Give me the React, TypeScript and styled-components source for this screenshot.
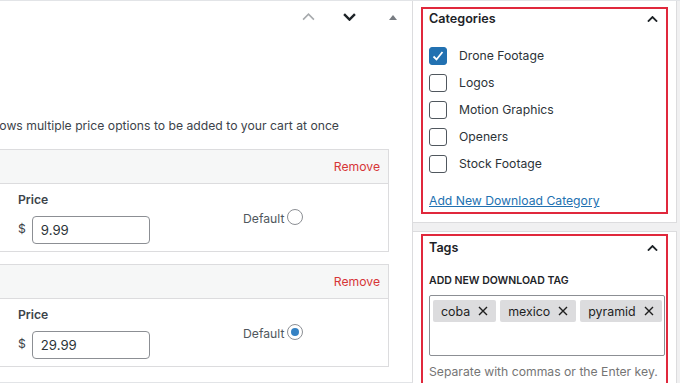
import styled, { createGlobalStyle } from "styled-components"

const GlobalStyle = createGlobalStyle`
	html, body {
		margin: 0;
		padding: 0;
		background: #fff;
	}
	body {
		font-family: Inter, "Liberation Sans", Arial, sans-serif;
		font-size: 12.2px;
		color: #1d2327;
		-webkit-font-smoothing: antialiased;
	}
`

const Page = styled.div`
	width: 680px;
	height: 383px;
	box-sizing: border-box;
	display: flex;
	overflow: hidden;
	border-top: 1px solid #e2e4e7;
`

/* main column, cropped on its left side */
const Main = styled.div`
	width: 413px;
	flex-shrink: 0;
	box-sizing: border-box;
	border-right: 1px solid #dcdcde;
	border-bottom: 1px solid #e2e4e7;
	overflow: hidden;
`

const Inner = styled.div`
	margin-left: -48px;
`

const Toolbar = styled.div`
	height: 32px;
	display: flex;
	justify-content: flex-end;
	align-items: center;
	gap: 28px;
	padding-right: 15px;
`

const ToolIcon = styled.svg<{ $push?: number }>`
	display: block;
	margin-left: ${({ $push }) => $push || 0}px;
`

const Description = styled.p`
	margin: 83px 0 0;
	padding-left: 33px;
	line-height: 20px;
	color: #3c434a;
	white-space: nowrap;
`

const PriceList = styled.div`
	margin: 13px 23px 0 0;
	display: flex;
	flex-direction: column;
	gap: 12px;
`

const PriceRow = styled.div`
	border: 1px solid #dcdcde;
	background: #fff;
`

const RowHeader = styled.div`
	height: 33px;
	display: flex;
	justify-content: flex-end;
	align-items: center;
	padding-right: 8px;
	background: #f6f7f7;
	border-bottom: 1px solid #dcdcde;
`

const RemoveLink = styled.a`
	color: #d63638;
	text-decoration: none;
	cursor: pointer;
`

const RowBody = styled.div`
	height: 67px;
	display: grid;
	grid-template-columns: 225px auto;
	padding-left: 65px;
`

const PriceField = styled.div`
	display: flex;
	flex-direction: column;
	gap: 7px;
	padding-top: 7px;
`

const FieldLabel = styled.span`
	font-weight: 600;
	line-height: 18px;
	color: #3c434a;
`

const InputRow = styled.div`
	display: flex;
	align-items: center;
	gap: 6px;
	color: #3c434a;
`

const Currency = styled.span`
	margin-top: -3px;
`

const PriceInput = styled.input`
	width: 118px;
	height: 28px;
	box-sizing: border-box;
	border: 1px solid #8c8f94;
	border-radius: 4px;
	padding: 0 8px;
	font-family: inherit;
	font-size: 13.2px;
	color: #2c3338;
	outline: none;
`

const DefaultField = styled.label`
	display: flex;
	align-items: flex-start;
	gap: 3px;
	padding-top: 25px;
	line-height: 20px;
	color: #50575e;
`

const Radio = styled.span<{ $checked?: boolean }>`
	width: 16px;
	height: 16px;
	box-sizing: border-box;
	border: 1px solid #8c8f94;
	border-radius: 50%;
	background: #fff;
	display: flex;
	align-items: center;
	justify-content: center;

	&::after {
		content: "";
		width: 8px;
		height: 8px;
		border-radius: 50%;
		background: ${({ $checked }) => ($checked ? "#3582c4" : "transparent")};
	}
`

/* sidebar */
const Sidebar = styled.div`
	flex: 1;
	min-width: 0;
	display: flex;
	flex-direction: column;
	gap: 8px;
	background: #f0f0f1;
`

const Postbox = styled.div<{ $top: number }>`
	background: #fff;
	margin-right: 3px;
	padding: ${({ $top }) => $top}px 8px 8px;
	border-right: 1px solid #dcdcde;
	border-top: 1px solid #dcdcde;
	border-bottom: 1px solid #dcdcde;

	&:first-child {
		border-top: none;
	}
`

const Highlight = styled.div<{ $top: number }>`
	border: 2px solid #e0283c;
	padding: ${({ $top }) => $top}px 1px 2px 6px;
`

const TitleRow = styled.div`
	height: 18px;
	display: flex;
	justify-content: space-between;
	align-items: center;
	padding-right: 7px;
`

const Title = styled.h2`
	margin: 0;
	font-size: 12.6px;
	font-weight: 600;
	line-height: 18px;
	color: #1d2327;
`

const CheckList = styled.ul`
	list-style: none;
	margin: 19px 0 0;
	padding: 0;
	display: flex;
	flex-direction: column;
	gap: 9px;
`

const CheckItem = styled.li`
	display: flex;
	align-items: center;
	gap: 12px;
	line-height: 18px;
	color: #2c3338;
`

const Checkbox = styled.span<{ $checked?: boolean }>`
	width: 18px;
	height: 18px;
	box-sizing: border-box;
	border: 1px solid ${({ $checked }) => ($checked ? "#2271b1" : "#50575e")};
	border-radius: 3px;
	background: ${({ $checked }) => ($checked ? "#2271b1" : "#fff")};
	display: flex;
	align-items: center;
	justify-content: center;
`

const AddLink = styled.a`
	display: block;
	margin-top: 19px;
	line-height: 18px;
	color: #2271b1;
	text-decoration: underline;
	cursor: pointer;
`

const SmallLabel = styled.div`
	margin-top: 16px;
	font-size: 10.5px;
	font-weight: 600;
	line-height: 16px;
	text-transform: uppercase;
	color: #1d2327;
`

const TagBox = styled.div`
	margin-top: 6px;
	height: 61px;
	box-sizing: border-box;
	border: 1px solid #8c8f94;
	border-radius: 2px;
	padding: 4px 3px;
	display: flex;
	align-items: flex-start;
	gap: 4px;
`

const Chip = styled.span`
	height: 22px;
	display: inline-flex;
	align-items: center;
	gap: 8px;
	padding: 0 8px;
	border-radius: 2px;
	background: #dcdcde;
	color: #1e1e1e;
	font-size: 12.4px;
`

const Help = styled.p`
	margin: 7px 0 0;
	line-height: 18px;
	color: #757575;
	white-space: nowrap;
`

const Chevron = ({ color = "#1d2327", width = 2, down = false, w = 12 }) => (
	<svg width={w} height={w * 0.6} viewBox="0 0 12 7" style={{ display: "block" }}>
		<path
			d={down ? "M1 1 L6 6 L11 1" : "M1 6 L6 1 L11 6"}
			fill="none"
			stroke={color}
			strokeWidth={width}
		/>
	</svg>
)

const Cross = () => (
	<svg width="10" height="10" viewBox="0 0 10 10">
		<path d="M1 1 L9 9 M9 1 L1 9" stroke="#1e1e1e" strokeWidth="1.4" />
	</svg>
)

const Tick = () => (
	<svg width="14" height="14" viewBox="0 0 14 14">
		<path d="M2.5 7.5 L5.5 10.5 L11.5 3" fill="none" stroke="#fff" strokeWidth="1.8" />
	</svg>
)

const prices = [
	{ amount: "9.99", isDefault: false },
	{ amount: "29.99", isDefault: true },
]

const categories = [
	{ name: "Drone Footage", checked: true },
	{ name: "Logos" },
	{ name: "Motion Graphics" },
	{ name: "Openers" },
	{ name: "Stock Footage" },
]

const tags = ["coba", "mexico", "pyramid"]

const App = () => {
	return (
		<>
			<GlobalStyle />
			<Page>
				<Main>
					<Inner>
						<Toolbar>
							<ToolIcon as="span">
								<Chevron color="#a7aaad" width={1.5} w={13} />
							</ToolIcon>
							<ToolIcon as="span">
								<Chevron width={2.2} down w={13} />
							</ToolIcon>
							<ToolIcon $push={5} width="8" height="5" viewBox="0 0 8 5">
								<path d="M0 5 L4 0 L8 5 Z" fill="#787c82" />
							</ToolIcon>
						</Toolbar>
						<Description>Allows multiple price options to be added to your cart at once</Description>
						<PriceList>
							{prices.map((p) => (
								<PriceRow key={p.amount}>
									<RowHeader>
										<RemoveLink>Remove</RemoveLink>
									</RowHeader>
									<RowBody>
										<PriceField>
											<FieldLabel>Price</FieldLabel>
											<InputRow>
												<Currency>$</Currency>
												<PriceInput defaultValue={p.amount} />
											</InputRow>
										</PriceField>
										<DefaultField>
											Default
											<Radio $checked={p.isDefault} />
										</DefaultField>
									</RowBody>
								</PriceRow>
							))}
						</PriceList>
					</Inner>
				</Main>

				<Sidebar>
					<Postbox $top={6}>
						<Highlight $top={1}>
							<TitleRow>
								<Title>Categories</Title>
								<Chevron w={11} />
							</TitleRow>
							<CheckList>
								{categories.map((c) => (
									<CheckItem key={c.name}>
										<Checkbox $checked={c.checked}>{c.checked && <Tick />}</Checkbox>
										{c.name}
									</CheckItem>
								))}
							</CheckList>
							<AddLink>Add New Download Category</AddLink>
						</Highlight>
					</Postbox>

					<Postbox $top={2}>
						<Highlight $top={3}>
							<TitleRow>
								<Title>Tags</Title>
								<Chevron w={11} />
							</TitleRow>
							<SmallLabel>Add New Download Tag</SmallLabel>
							<TagBox>
								{tags.map((t) => (
									<Chip key={t}>
										{t}
										<Cross />
									</Chip>
								))}
							</TagBox>
							<Help>Separate with commas or the Enter key.</Help>
						</Highlight>
					</Postbox>
				</Sidebar>
			</Page>
		</>
	)
}

export default App
